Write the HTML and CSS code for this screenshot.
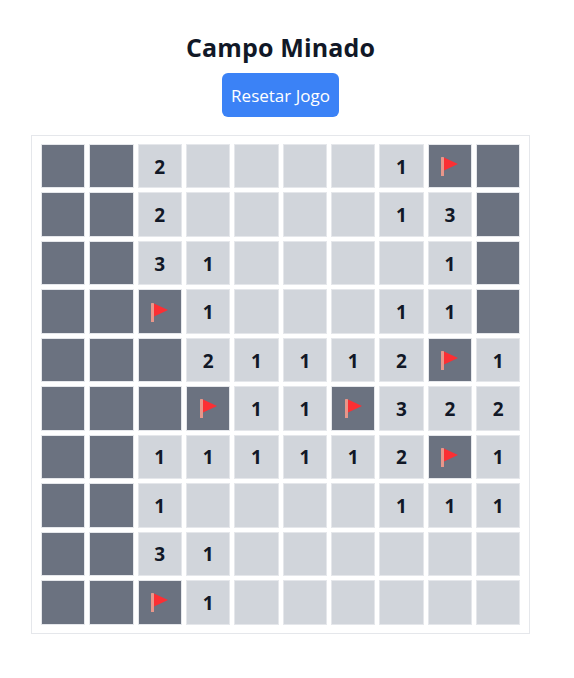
FILE: index.html
```html
<!DOCTYPE html>
<html lang="en">
<head>
    <meta charset="UTF-8">
    <meta name="viewport" content="width=device-width, initial-scale=1.0">
    <title>Campo Minado</title>
    <link rel="stylesheet" href="styles.css">
</head>
<body>

<svg class="defs" width="0" height="0">
    <symbol id="flag" viewBox="0 0 17 20">
        <rect x="0" y="1" width="3" height="19.4" rx="0.6" fill="#e8968a"/>
        <path d="M3 1.6 L17 8 L3 14.4 Z" fill="#fb2f33"/>
    </symbol>
</svg>

<div class="container">
    <h1>Campo Minado</h1>
    <button type="button" class="reset">Resetar Jogo</button>

    <div class="board">
        <div class="cell hidden"></div><div class="cell hidden"></div><div class="cell open">2</div><div class="cell open"></div><div class="cell open"></div><div class="cell open"></div><div class="cell open"></div><div class="cell open">1</div><div class="cell hidden"><svg class="flag"><use href="#flag"/></svg></div><div class="cell hidden"></div>
        <div class="cell hidden"></div><div class="cell hidden"></div><div class="cell open">2</div><div class="cell open"></div><div class="cell open"></div><div class="cell open"></div><div class="cell open"></div><div class="cell open">1</div><div class="cell open">3</div><div class="cell hidden"></div>
        <div class="cell hidden"></div><div class="cell hidden"></div><div class="cell open">3</div><div class="cell open">1</div><div class="cell open"></div><div class="cell open"></div><div class="cell open"></div><div class="cell open"></div><div class="cell open">1</div><div class="cell hidden"></div>
        <div class="cell hidden"></div><div class="cell hidden"></div><div class="cell hidden"><svg class="flag"><use href="#flag"/></svg></div><div class="cell open">1</div><div class="cell open"></div><div class="cell open"></div><div class="cell open"></div><div class="cell open">1</div><div class="cell open">1</div><div class="cell hidden"></div>
        <div class="cell hidden"></div><div class="cell hidden"></div><div class="cell hidden"></div><div class="cell open">2</div><div class="cell open">1</div><div class="cell open">1</div><div class="cell open">1</div><div class="cell open">2</div><div class="cell hidden"><svg class="flag"><use href="#flag"/></svg></div><div class="cell open">1</div>
        <div class="cell hidden"></div><div class="cell hidden"></div><div class="cell hidden"></div><div class="cell hidden"><svg class="flag"><use href="#flag"/></svg></div><div class="cell open">1</div><div class="cell open">1</div><div class="cell hidden"><svg class="flag"><use href="#flag"/></svg></div><div class="cell open">3</div><div class="cell open">2</div><div class="cell open">2</div>
        <div class="cell hidden"></div><div class="cell hidden"></div><div class="cell open">1</div><div class="cell open">1</div><div class="cell open">1</div><div class="cell open">1</div><div class="cell open">1</div><div class="cell open">2</div><div class="cell hidden"><svg class="flag"><use href="#flag"/></svg></div><div class="cell open">1</div>
        <div class="cell hidden"></div><div class="cell hidden"></div><div class="cell open">1</div><div class="cell open"></div><div class="cell open"></div><div class="cell open"></div><div class="cell open"></div><div class="cell open">1</div><div class="cell open">1</div><div class="cell open">1</div>
        <div class="cell hidden"></div><div class="cell hidden"></div><div class="cell open">3</div><div class="cell open">1</div><div class="cell open"></div><div class="cell open"></div><div class="cell open"></div><div class="cell open"></div><div class="cell open"></div><div class="cell open"></div>
        <div class="cell hidden"></div><div class="cell hidden"></div><div class="cell hidden"><svg class="flag"><use href="#flag"/></svg></div><div class="cell open">1</div><div class="cell open"></div><div class="cell open"></div><div class="cell open"></div><div class="cell open"></div><div class="cell open"></div><div class="cell open"></div>
    </div>
</div>

</body>
</html>
```

FILE: styles.css
```css
body {
    font-family: "Open Sans", "Noto Sans", Arial, sans-serif;
    background-color: #fff;
    margin: 0;
    padding: 0;
    color: #111827;
}

.defs {
    display: block;
    height: 0;
}

.container {
    width: 561px;
    padding-top: 31px;
    display: flex;
    flex-direction: column;
    align-items: center;
}

h1 {
    font-size: 25px;
    line-height: 32px;
    font-weight: 700;
    letter-spacing: 0.15px;
    margin: 0 0 10px;
}

.reset {
    height: 44px;
    width: 117px;
    padding: 0;
    border: none;
    border-radius: 6px;
    background-color: #3b82f6;
    color: #fff;
    font-family: inherit;
    font-size: 17px;
    margin-bottom: 18px;
}

.board {
    box-sizing: border-box;
    width: 499px;
    height: 499px;
    padding: 8px 8.6px 8.5px 8.9px;
    border: 1px solid #e5e7eb;
    display: grid;
    grid-template-columns: repeat(10, 1fr);
    grid-template-rows: repeat(10, 1fr);
    gap: 4px;
}

.cell {
    display: flex;
    justify-content: center;
    align-items: center;
    border: 1px solid #e5e7eb;
    font-size: 19px;
    font-weight: 700;
    padding-top: 1px;
}

.hidden {
    background-color: #6b7280;
}

.open {
    background-color: #d1d5db;
}

.flag {
    width: 17px;
    height: 20px;
    margin-top: -1px;
}
```
